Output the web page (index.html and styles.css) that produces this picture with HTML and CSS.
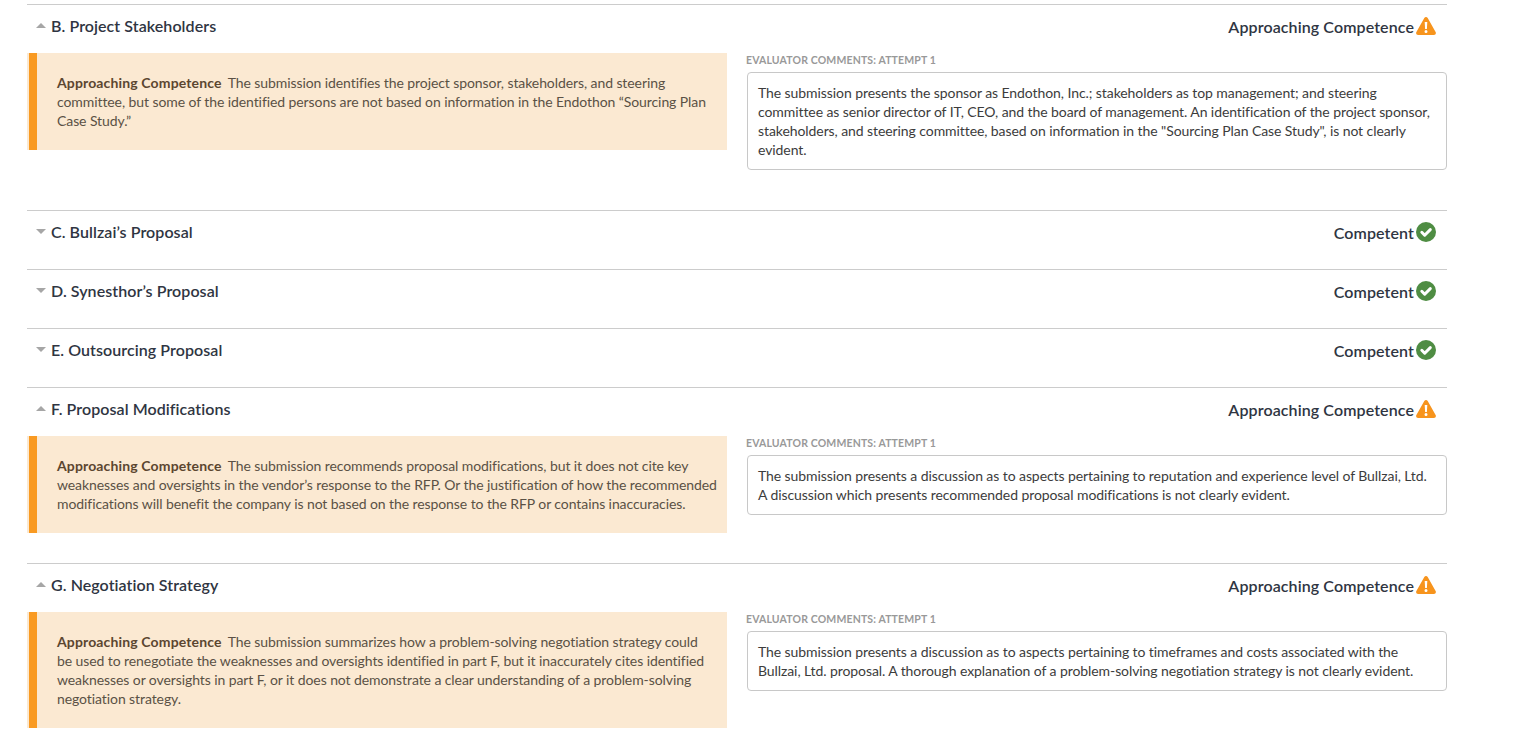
FILE: index.html
```html
<!DOCTYPE html>
<html lang="en">
<head>
  <meta charset="UTF-8">
  <meta name="viewport" content="width=device-width, initial-scale=1.0">
  <title>Evaluation Report</title>
  <link rel="stylesheet" href="styles.css">
</head>
<body>
  <svg class="sprites" width="0" height="0">
    <symbol id="icon-warning" viewBox="0 0 20 18">
      <path fill="#f7941d" d="M8.3 1 .4 14.9C-.4 16.3.5 18 2.1 18h15.8c1.600 0 2.500-1.700 1.700-3.100L11.700 1c-.8-1.300-2.600-1.300-3.400 0z"/>
      <path fill="#fff" d="M8.700 5h2.600l-.4 7H9.100zM10 13.100a1.500 1.500 0 1 1 0 3 1.500 1.500 0 0 1 0-3z"/>
    </symbol>
    <symbol id="icon-check" viewBox="0 0 20 20">
      <circle cx="10" cy="10" r="10" fill="#4f8d43"/>
      <path fill="none" stroke="#fff" stroke-width="3" stroke-linecap="round" stroke-linejoin="round" d="M5.800 10.300 8.700 13.200 14.300 7.600"/>
    </symbol>
  </svg>

  <main class="report">
    <section class="aspect">
      <div class="aspect-head">
        <h3 class="aspect-title"><span class="caret caret-up"></span>B. Project Stakeholders</h3>
        <div class="status">Approaching Competence<svg class="status-icon warning"><use href="#icon-warning"/></svg></div>
      </div>
      <div class="aspect-body">
        <div class="rubric">
          <strong>Approaching Competence</strong> The submission identifies the project sponsor, stakeholders, and steering committee, but some of the identified persons are not based on information in the Endothon “Sourcing Plan Case Study.”
        </div>
        <div class="comments">
          <div class="comments-label">Evaluator Comments: Attempt 1</div>
          <div class="comments-box">The submission presents the sponsor as Endothon, Inc.; stakeholders as top management; and steering committee as senior director of IT, CEO, and the board of management. An identification of the project sponsor, stakeholders, and steering committee, based on information in the "Sourcing Plan Case Study", is not clearly evident.</div>
        </div>
      </div>
    </section>

    <section class="aspect">
      <div class="aspect-head">
        <h3 class="aspect-title"><span class="caret caret-down"></span>C. Bullzai’s Proposal</h3>
        <div class="status">Competent<svg class="status-icon"><use href="#icon-check"/></svg></div>
      </div>
    </section>

    <section class="aspect">
      <div class="aspect-head">
        <h3 class="aspect-title"><span class="caret caret-down"></span>D. Synesthor’s Proposal</h3>
        <div class="status">Competent<svg class="status-icon"><use href="#icon-check"/></svg></div>
      </div>
    </section>

    <section class="aspect">
      <div class="aspect-head">
        <h3 class="aspect-title"><span class="caret caret-down"></span>E. Outsourcing Proposal</h3>
        <div class="status">Competent<svg class="status-icon"><use href="#icon-check"/></svg></div>
      </div>
    </section>

    <section class="aspect">
      <div class="aspect-head">
        <h3 class="aspect-title"><span class="caret caret-up"></span>F. Proposal Modifications</h3>
        <div class="status">Approaching Competence<svg class="status-icon warning"><use href="#icon-warning"/></svg></div>
      </div>
      <div class="aspect-body">
        <div class="rubric">
          <strong>Approaching Competence</strong> The submission recommends proposal modifications, but it does not cite key weaknesses and oversights in the vendor’s response to the RFP. Or the justification of how the recommended modifications will benefit the company is not based on the response to the RFP or contains inaccuracies.
        </div>
        <div class="comments">
          <div class="comments-label">Evaluator Comments: Attempt 1</div>
          <div class="comments-box">The submission presents a discussion as to aspects pertaining to reputation and experience level of Bullzai, Ltd. A discussion which presents recommended proposal modifications is not clearly evident.</div>
        </div>
      </div>
    </section>

    <section class="aspect">
      <div class="aspect-head">
        <h3 class="aspect-title"><span class="caret caret-up"></span>G. Negotiation Strategy</h3>
        <div class="status">Approaching Competence<svg class="status-icon warning"><use href="#icon-warning"/></svg></div>
      </div>
      <div class="aspect-body">
        <div class="rubric">
          <strong>Approaching Competence</strong> The submission summarizes how a problem-solving negotiation strategy could<br>be used to renegotiate the weaknesses and oversights identified in part F, but it inaccurately cites identified weaknesses or oversights in part F, or it does not demonstrate a clear understanding of a problem-solving negotiation strategy.
        </div>
        <div class="comments">
          <div class="comments-label">Evaluator Comments: Attempt 1</div>
          <div class="comments-box">The submission presents a discussion as to aspects pertaining to timeframes and costs associated with the Bullzai, Ltd. proposal. A thorough explanation of a problem-solving negotiation strategy is not clearly evident.</div>
        </div>
      </div>
    </section>
  </main>
</body>
</html>
```

FILE: styles.css
```css
html, body {
  height: 100%;
  overflow: hidden;
}
body {
  margin: 0;
  padding: 4px 0 0 27px;
  box-sizing: border-box;
  font-family: Lato, "Liberation Sans", sans-serif;
  font-size: 14px;
  line-height: 19px;
  letter-spacing: -0.08px;
  color: #3c3c3c;
  background: #fff;
}
.sprites {
  position: absolute;
}
.report {
  width: 1420px;
}
.aspect {
  border-top: 1px solid #ccc;
}
.aspect-head {
  display: flex;
  justify-content: space-between;
  align-items: center;
  height: 42px;
  padding: 0 11px 16px 9px;
}
.aspect-title {
  margin: 0;
  padding-bottom: 2px;
  font-size: 16px;
  font-weight: 600;
  letter-spacing: 0.07px;
  color: #2f3542;
  display: flex;
  align-items: center;
}
.caret {
  width: 0;
  height: 0;
  margin-right: 5px;
  border-left: 5px solid transparent;
  border-right: 5px solid transparent;
}
.caret-up {
  border-bottom: 5px solid #a6a6a6;
}
.caret-down {
  border-top: 5px solid #a6a6a6;
}
.status {
  display: flex;
  align-items: center;
  gap: 2px;
  font-size: 16px;
  font-weight: 600;
  letter-spacing: 0.1px;
  color: #2f3542;
}
.status-icon {
  width: 20px;
  height: 20px;
}
.aspect-body {
  display: flex;
  justify-content: space-between;
  align-items: flex-start;
  margin-top: -10px;
}
.rubric {
  width: 700px;
  box-sizing: border-box;
  margin-bottom: 30px;
  padding: 20px 8px 20px 30px;
  background: #fbe9d2;
  box-shadow: inset 2px 0 #fbe9d2, inset 10px 0 #f99a22;
  letter-spacing: -0.085px;
  color: #5a5145;
}
.rubric strong {
  margin-right: 3px;
  letter-spacing: 0.14px;
  color: #5b4630;
}
.comments {
  width: 700px;
  margin-bottom: 40px;
}
.comments-label {
  height: 19px;
  margin-left: -1px;
  font-size: 10.5px;
  font-weight: 700;
  letter-spacing: 0.15px;
  line-height: 15px;
  text-transform: uppercase;
  color: #999;
}
.comments-box {
  padding: 10px;
  border: 1px solid #c8c8c8;
  border-radius: 4px;
  color: #3c3c3c;
}
```
